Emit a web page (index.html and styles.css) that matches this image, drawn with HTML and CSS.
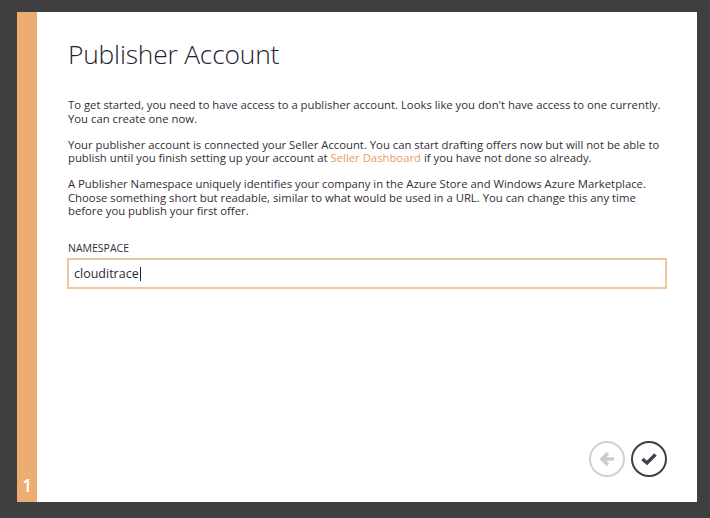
FILE: index.html
```html
<!DOCTYPE html>
<html>
<head>
<meta charset="utf-8">
<link rel="stylesheet" href="styles.css">
</head>
<body>
<div class="dialog">
  <div class="strip"><span class="step">1</span></div>
  <div class="content">
    <h1 class="title">Publisher Account</h1>
    <p class="para">To get started, you need to have access to a publisher account. Looks like you don't have access to one currently.<br>You can create one now.</p>
    <p class="para">Your publisher account is connected your Seller Account. You can start drafting offers now but will not be able to<br>publish until you finish setting up your account at <a class="link" href="#">Seller Dashboard</a> if you have not done so already.</p>
    <p class="para">A Publisher Namespace uniquely identifies your company in the Azure Store and Windows Azure Marketplace.<br>Choose something short but readable, similar to what would be used in a URL. You can change this any time<br>before you publish your first offer.</p>
    <div class="field">
      <label class="label">NAMESPACE</label>
      <div class="input">clouditrace<span class="caret"></span></div>
    </div>
    <div class="footer">
      <button class="btn btn-back" aria-label="Back">
        <svg width="20" height="20" viewBox="0 0 20 20"><path d="M17 10H6M11 4L5 10L11 16" fill="none" stroke="#c9cdd2" stroke-width="3.6" stroke-linecap="butt" stroke-linejoin="miter"/></svg>
      </button>
      <button class="btn btn-ok" aria-label="Finish">
        <svg width="20" height="20" viewBox="0 0 20 20"><path d="M3.5 10L8 14L16.5 5.5" fill="none" stroke="#3b424d" stroke-width="3.4" stroke-linecap="butt" stroke-linejoin="miter"/></svg>
      </button>
    </div>
  </div>
</div>
</body>
</html>
```
FILE: styles.css
```css
html, body {
  margin: 0;
  padding: 0;
}
body {
  background: #3f3f3f;
  width: 710px;
  height: 518px;
  padding: 12px 13px 16px 17px;
  box-sizing: border-box;
  font-family: "Open Sans", "Noto Sans", sans-serif;
}
.dialog {
  display: flex;
  width: 680px;
  height: 490px;
  background: #ffffff;
}
.strip {
  width: 20px;
  background: #ecac72;
  display: flex;
  flex-direction: column;
  justify-content: flex-end;
  align-items: flex-start;
}
.step {
  color: #ffffff;
  font-size: 18px;
  font-weight: 600;
  line-height: 20px;
  padding: 0 0 7px 5px;
}
.content {
  flex: 1;
  display: flex;
  flex-direction: column;
  padding: 24px 30px 25px 30px;
}
.title {
  margin: 0 0 0 1px;
  font-weight: 300;
  font-size: 26.4px;
  line-height: 36px;
  color: #1e2233;
  letter-spacing: -0.2px;
}
.para {
  margin: 0 0 12.5px 1px;
  font-size: 11.3px;
  line-height: 13.5px;
  color: #352c38;
  white-space: nowrap;
}
.title + .para {
  margin-top: 26px;
}
.link {
  color: #ec9a5e;
  text-decoration: none;
}
.field {
  margin-top: 11px;
  display: flex;
  flex-direction: column;
}
.label {
  font-size: 10.5px;
  line-height: 14px;
  color: #2f2f3a;
  margin: 0 0 3px 1px;
}
.input {
  height: 31px;
  box-sizing: border-box;
  border: 2px solid #efc6a0;
  padding: 0 5px;
  display: flex;
  align-items: center;
  font-size: 12.5px;
  color: #2a2a33;
}
.caret {
  display: inline-block;
  width: 1px;
  height: 14px;
  background: #222;
  margin-left: 1px;
}
.footer {
  margin-top: auto;
  display: flex;
  justify-content: flex-end;
  gap: 6px;
}
.btn {
  width: 36px;
  height: 36px;
  border-radius: 50%;
  background: #fff;
  padding: 0;
  display: flex;
  align-items: center;
  justify-content: center;
  cursor: pointer;
}
.btn-back {
  border: 2px solid #cfd2d7;
}
.btn-ok {
  border: 2px solid #3b424d;
}
```
